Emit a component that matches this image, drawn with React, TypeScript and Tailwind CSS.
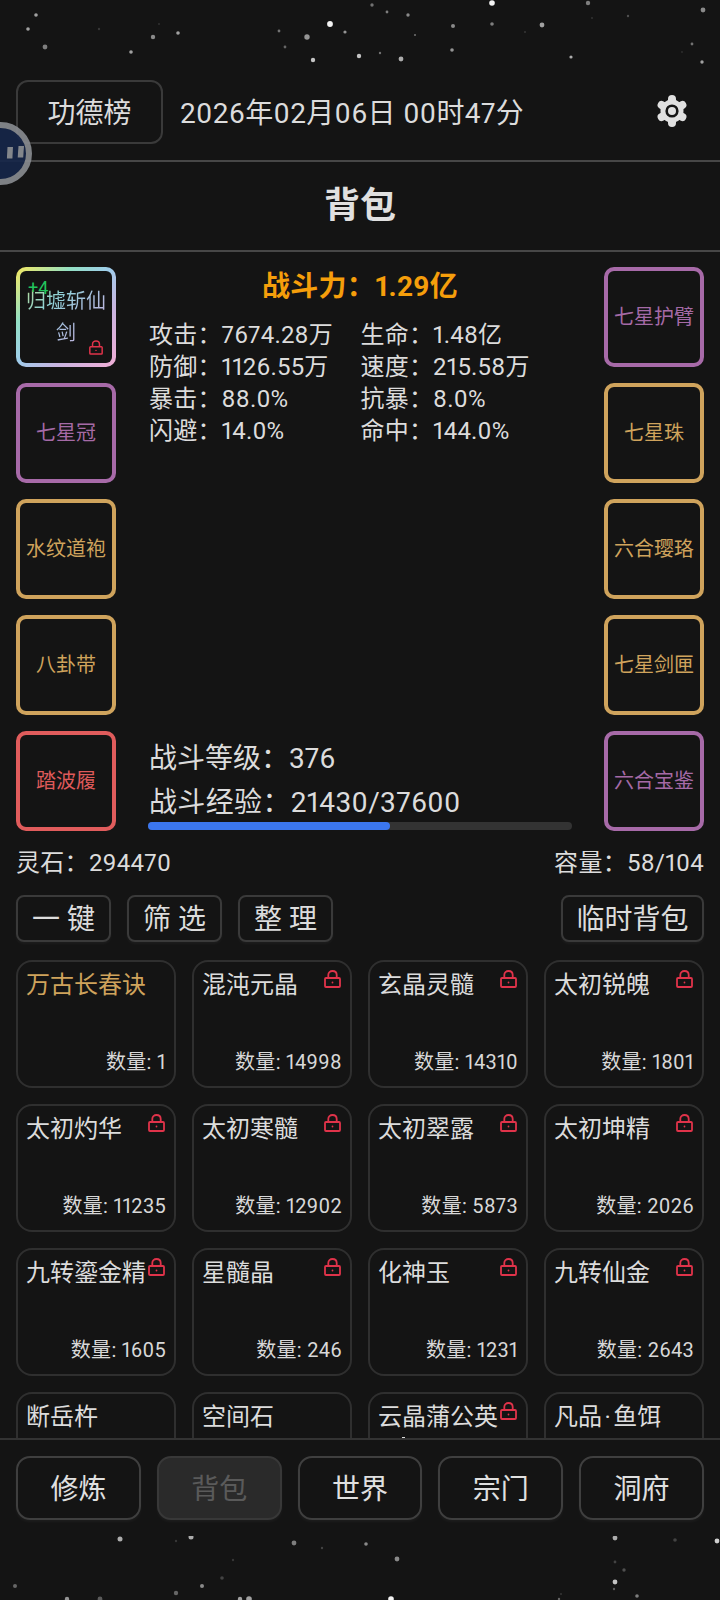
import React from "react";

const FONT = "font-['Roboto','Noto_Sans_CJK_SC',sans-serif]";

type Star = [number, number, number, number];

const topStars: Star[] = [
  [36, 15, 1.8, 0.6], [28, 29, 1.8, 0.6], [45, 47, 2.4, 0.45], [153, 37, 2.2, 0.5], [178, 33, 1.8, 0.6],
  [131, 52, 1.8, 0.6], [99, 29, 1.2, 0.15], [159, 24, 1, 0.12], [279, 31, 1.4, 0.4], [285, 47, 1.4, 0.35],
  [307, 37, 2.7, 0.55], [330, 24, 2.9, 0.95], [345, 32, 1.6, 0.55], [313, 60, 2.2, 0.75], [359, 56, 2.2, 0.75],
  [380, 53, 1.2, 0.4], [401, 59, 2.4, 0.65], [372, 5, 1.7, 0.4], [387, 12, 1.4, 0.45], [408, 15, 1.7, 0.5],
  [415, 35, 1, 0.4], [453, 26, 2, 0.5], [452, 50, 1.8, 0.55], [492, 24, 1.8, 0.45], [492, 3, 2.8, 0.95],
  [542, 25, 2.4, 0.6], [525, 32, 1, 0.15], [571, 57, 1.6, 0.65], [588, 3, 2.2, 0.45], [592, 18, 1.1, 0.12],
  [628, 16, 1.2, 0.25], [692, 44, 1.4, 0.4], [702, 62, 1.7, 0.6], [703, 10, 2.4, 0.5], [682, 52, 0.9, 0.12],
];

const bottomStars: Star[] = [
  [120, 19, 2.5, 0.65], [191, 17, 2.5, 0.65], [15, 66, 2, 0.35], [67, 79, 2.2, 0.55], [100, 79, 2.4, 0.3],
  [135, 83, 2.7, 0.9], [176, 73, 2.2, 0.35], [202, 66, 2, 0.5], [176, 21, 1.2, 0.15], [222, 58, 1.8, 0.2],
  [233, 40, 1.2, 0.15], [226, 84, 1.8, 0.45], [240, 79, 2.2, 0.6], [249, 79, 2.8, 0.6], [294, 23, 2.4, 0.45],
  [322, 28, 1.2, 0.2], [308, 87, 2.2, 0.8], [326, 96, 2.2, 0.8], [13, 94, 1.8, 0.15], [163, 96, 1.7, 0.25],
  [366, 24, 1.8, 0.5], [363, 85, 1.8, 0.3], [397, 39, 2.4, 0.5], [391, 79, 2.8, 0.95], [509, 88, 1.2, 0.25],
  [511, 96, 1.6, 0.6], [615, 18, 2.4, 0.65], [675, 20, 1.8, 0.2], [717, 21, 2.4, 0.8], [615, 42, 1.4, 0.2],
  [615, 62, 2.4, 0.75], [624, 50, 1.7, 0.25], [637, 76, 1.8, 0.45], [614, 69, 1.2, 0.3], [559, 79, 1.2, 0.35],
  [561, 74, 1, 0.15],
].map(([x, y, r, o]) => [x, y - 16, r, o] as Star);

function Stars({ stars, height }: { stars: Star[]; height: number }) {
  return (
    <svg width="720" height={height} viewBox={`0 0 720 ${height}`} className="block blur-[0.7px]">
      {stars.map(([x, y, r, o], i) => (
        <circle key={i} cx={x} cy={y} r={r} fill="#ffffff" opacity={o} />
      ))}
    </svg>
  );
}

function Lock({ className }: { className: string }) {
  return (
    <svg viewBox="0 0 17 18" fill="none" className={className}>
      <path d="M4.3 8V4.9C4.3 2.6 6.1 1 8.5 1s4.2 1.6 4.2 3.9V8" stroke="#e0334a" strokeWidth="1.8" />
      <rect x="1" y="8" width="15" height="9" rx="1" stroke="#e0334a" strokeWidth="1.8" />
      <circle cx="8.5" cy="12.5" r="0.9" fill="#e0334a" />
    </svg>
  );
}

function Gear() {
  return (
    <svg width="34" height="34" viewBox="-17 -17 34 34" className="shrink-0">
      <circle r="11.5" fill="#e0e0e0" />
      {[0, 60, 120, 180, 240, 300].map((a) => (
        <line
          key={a}
          x1="0"
          y1="0"
          x2="0"
          y2="-12"
          stroke="#e0e0e0"
          strokeWidth="8"
          strokeLinecap="round"
          transform={`rotate(${a})`}
        />
      ))}
      <circle r="6.6" fill="#141414" />
      <circle r="4" fill="#e0e0e0" />
    </svg>
  );
}

function Slot({ name, tone }: { name: string; tone: "purple" | "gold" | "red" }) {
  const cls =
    tone === "purple"
      ? "border-[#a76aa8] text-[#a56aa6]"
      : tone === "gold"
        ? "border-[#cfa35c] text-[#cfa35c]"
        : "border-[#e05c5c] text-[#df5a5a]";
  return (
    <div className={`flex h-[100px] w-[100px] items-center justify-center rounded-[10px] border-4 text-[20px] ${cls}`}>
      {name}
    </div>
  );
}

function LegendSlot() {
  return (
    <div className="h-[100px] w-[100px] rounded-[10px] bg-[linear-gradient(135deg,#f6e85f,#93e0c4_28%,#9fcdeb_48%,#c9b4e0_70%,#f2aed6)] p-1">
      <div className="relative flex h-full w-full items-center justify-center rounded-[6px] bg-[#141414] px-[2px] text-center">
        <span className="bg-[linear-gradient(135deg,#b9dc8e,#8fd2d6_30%,#a9bfe0_55%,#c9aed8_85%)] bg-clip-text text-[20px] leading-[32px] text-transparent">
          归墟斩仙剑
        </span>
        <span className="absolute left-[8px] top-[6px] text-[18px] leading-[22px] text-[#22c55e]">+4</span>
        <Lock className="absolute bottom-[8px] right-[9px] h-[15px] w-[14px]" />
      </div>
    </div>
  );
}

const leftSlots: [string, "purple" | "gold" | "red"][] = [
  ["七星冠", "purple"],
  ["水纹道袍", "gold"],
  ["八卦带", "gold"],
  ["踏波履", "red"],
];
const rightSlots: [string, "purple" | "gold" | "red"][] = [
  ["七星护臂", "purple"],
  ["七星珠", "gold"],
  ["六合璎珞", "gold"],
  ["七星剑匣", "gold"],
  ["六合宝鉴", "purple"],
];

const stats = [
  "攻击：7674.28万",
  "生命：1.48亿",
  "防御：1126.55万",
  "速度：215.58万",
  "暴击：88.0%",
  "抗暴：8.0%",
  "闪避：14.0%",
  "命中：144.0%",
];

const items: { name: string; count?: number; gold?: boolean; locked?: boolean; peek?: boolean }[] = [
  { name: "万古长春诀", count: 1, gold: true },
  { name: "混沌元晶", count: 14998, locked: true },
  { name: "玄晶灵髓", count: 14310, locked: true },
  { name: "太初锐魄", count: 1801, locked: true },
  { name: "太初灼华", count: 11235, locked: true },
  { name: "太初寒髓", count: 12902, locked: true },
  { name: "太初翠露", count: 5873, locked: true },
  { name: "太初坤精", count: 2026, locked: true },
  { name: "九转鎏金精", count: 1605, locked: true },
  { name: "星髓晶", count: 246, locked: true },
  { name: "化神玉", count: 1231, locked: true },
  { name: "九转仙金", count: 2643, locked: true },
  { name: "断岳杵" },
  { name: "空间石" },
  { name: "云晶蒲公英", locked: true, peek: true },
  { name: "凡品\u200a·\u200a鱼饵" },
];

const actionBtn =
  "flex h-[47px] items-center justify-center rounded-[8px] border-2 border-[#3a3a3a] bg-[#141414] pt-[2px] text-[28px] leading-none text-[#dcdcdc] shadow-[0_2px_3px_rgba(255,255,255,0.04)]";

const navItems = ["修炼", "背包", "世界", "宗门", "洞府"];

export default function App() {
  return (
    <div className={`relative flex h-[1600px] w-[720px] flex-col overflow-hidden bg-[#141414] text-[#dcdcdc] proportional-nums ${FONT}`}>
      <div className="h-20 shrink-0">
        <Stars stars={topStars} height={80} />
      </div>

      <header className="flex h-[82px] shrink-0 items-start gap-[17px] border-b-2 border-[#474747] px-4">
        <button className="flex h-[64px] w-[147px] items-center justify-center rounded-[12px] border-2 border-[#3a3a3a] pt-[3px] text-[28px] text-[#dcdcdc]">
          功德榜
        </button>
        <div className="flex h-[64px] items-center whitespace-nowrap pt-[3px] text-[28px] tracking-[0.35px]">
          2026年02月06日 00时47分
        </div>
        <div className="ml-auto mr-[15px] flex h-[62px] items-center">
          <Gear />
        </div>
      </header>

      <div className="flex h-[90px] shrink-0 items-center justify-center border-b-2 border-[#474747] text-[36px] font-bold text-[#e0e0e0]">
        背包
      </div>

      <section className="flex shrink-0 justify-between px-4 pt-[15px]">
        <div className="flex w-[100px] flex-col gap-4">
          <LegendSlot />
          {leftSlots.map(([n, t]) => (
            <Slot key={n} name={n} tone={t} />
          ))}
        </div>

        <div className="flex w-[424px] flex-col pb-px">
          <div className="text-center text-[28px] font-bold leading-[40px] tracking-[0.2px] text-[#f59e0b]">战斗力：1.29亿</div>
          <div className="mt-[12px] grid grid-cols-2 pl-px text-[24px] leading-[32px] tracking-[0.2px]">
            {stats.map((s) => (
              <div key={s} className="whitespace-nowrap">
                {s}
              </div>
            ))}
          </div>
          <div className="mt-auto pl-px text-[28px] leading-[44px]">
            <div>战斗等级：376</div>
            <div className="tracking-[0.35px]">战斗经验：21430/37600</div>
          </div>
          <div className="-mt-[3px] h-2 w-full rounded-full bg-[#333333]">
            <div className="h-full w-[57%] rounded-full bg-[#3b76ee]" />
          </div>
        </div>

        <div className="flex w-[100px] flex-col gap-4">
          {rightSlots.map(([n, t]) => (
            <Slot key={n} name={n} tone={t} />
          ))}
        </div>
      </section>

      <div className="mt-4 flex shrink-0 justify-between px-4 text-[24px] leading-[32px]">
        <span className="tracking-[0.3px]">灵石：294470</span>
        <span className="tracking-[0.3px]">容量：58/104</span>
      </div>

      <div className="mt-4 flex shrink-0 gap-4 px-4">
        <button className={`${actionBtn} w-[95px]`}>一 键</button>
        <button className={`${actionBtn} w-[95px]`}>筛 选</button>
        <button className={`${actionBtn} w-[95px]`}>整 理</button>
        <button className={`${actionBtn} ml-auto w-[143px]`}>临时背包</button>
      </div>

      <div className="mt-[18px] min-h-0 flex-1 overflow-hidden px-4">
        <div className="grid grid-cols-4 gap-4">
          {items.map((it) => (
            <div
              key={it.name}
              className="relative flex h-32 flex-col justify-between rounded-[16px] border-2 border-[#2f2f2f] px-[8px] pb-[10px] pt-[7px]"
            >
              <div className={`text-[24px] leading-[32px] ${it.gold ? "text-[#cfa35c]" : "text-[#dcdcdc]"}`}>
                {it.name}
              </div>
              {it.count !== undefined && (
                <div className="text-right text-[20px] leading-[28px] tracking-[0.3px] text-[#d8d8d8]">数量: {it.count}</div>
              )}
              {it.locked && <Lock className="absolute right-[9px] top-[8px] h-[18px] w-[17px]" />}
              {it.peek && <span className="absolute left-[32px] top-[43px] h-[2px] w-[3px] bg-[#dcdcdc]" />}
            </div>
          ))}
        </div>
      </div>

      <nav className="flex h-[98px] shrink-0 gap-4 border-t-2 border-[#333333] bg-[#141414] px-4 pt-[16px]">
        {navItems.map((n) => (
          <button
            key={n}
            className={`flex h-[64px] flex-1 items-center justify-center rounded-[14px] border-2 pt-[3px] text-[28px] shadow-[0_2px_3px_rgba(255,255,255,0.04)] ${
              n === "背包"
                ? "border-[#383838] bg-[#2a2a2a] text-[#5a5a5a]"
                : "border-[#3f3f3f] text-[#e0e0e0]"
            }`}
          >
            {n}
          </button>
        ))}
      </nav>

      <div className="h-[64px] shrink-0">
        <Stars stars={bottomStars} height={64} />
      </div>

      <div className="absolute left-[-31px] top-[122px] h-[63px] w-[63px] rounded-full border-[6px] border-[#8a8d92] bg-[#16264a] opacity-90">
        <svg width="63" height="63" viewBox="0 0 63 63" className="absolute left-[-6px] top-[-6px]">
          <path d="M38.5 25h5.5l-.6 11.5h-5.5z" fill="#8f9398" />
          <path d="M49.5 24h5.5l-.8 11.5h-5.5z" fill="#8f9398" />
        </svg>
      </div>
    </div>
  );
}
